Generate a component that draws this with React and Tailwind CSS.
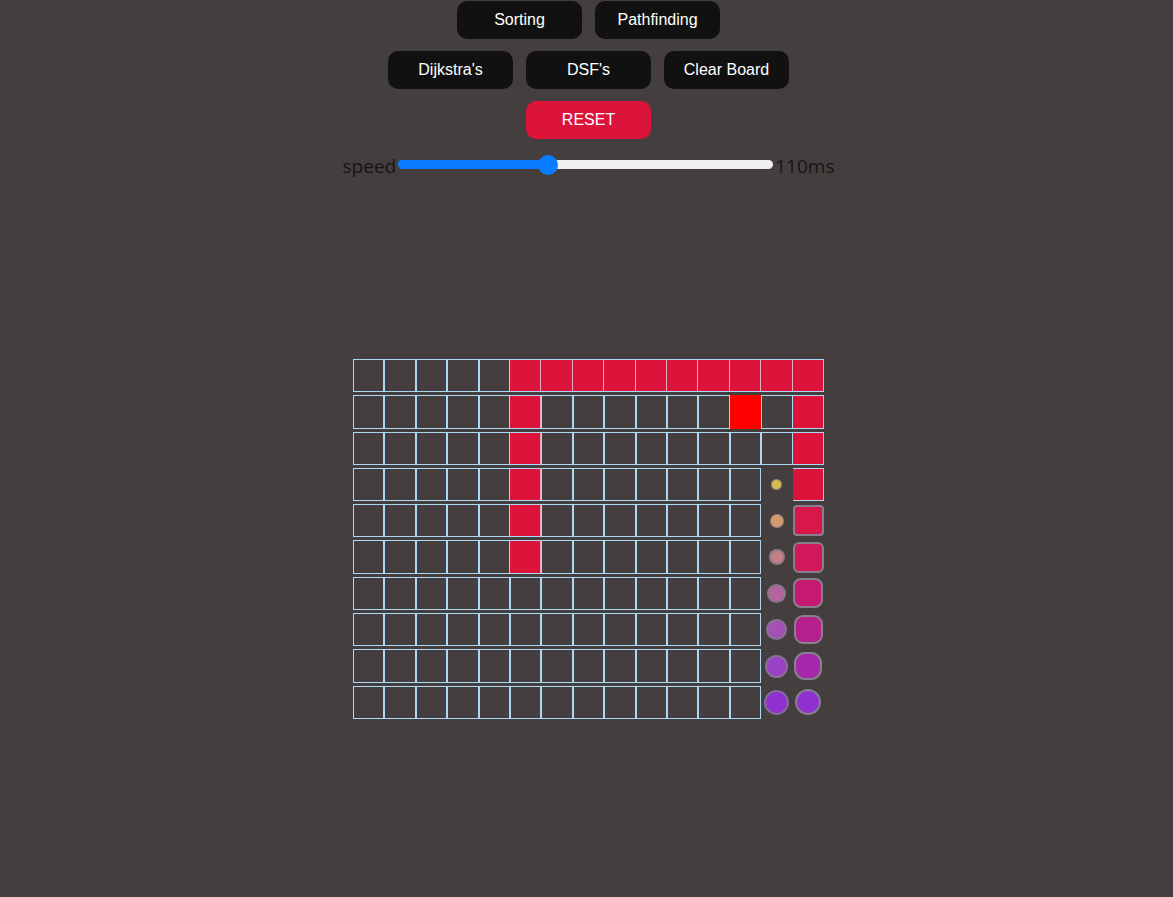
import React from 'react';

const ROWS = 10;
const COLS = 15;

const circles = {
  3: { size: 11, color: '#d8b94c', bw: 1 },
  4: { size: 13.5, color: '#d49a6c', bw: 1 },
  5: { size: 16, color: '#c47f82', bw: 2 },
  6: { size: 19, color: '#b2659c', bw: 2 },
  7: { size: 21, color: '#a352b4', bw: 2 },
  8: { size: 23, color: '#9842c6', bw: 2 },
  9: { size: 25, color: '#9030cf', bw: 2 },
};

const squares = {
  4: { size: 31, radius: 4, color: '#d8174a' },
  5: { size: 31, radius: 6, color: '#d0185a' },
  6: { size: 30, radius: 8, color: '#c61a72' },
  7: { size: 29, radius: 9, color: '#b6208c' },
  8: { size: 28, radius: 11, color: '#a628aa' },
  9: { size: 26, radius: 13, color: '#9030cf' },
};

const cellType = (r, c) => {
  if (r === 0 && c >= 5) return 'path';
  if (c === 5 && r <= 5) return 'path';
  if (c === 14 && r <= 3) return 'path';
  if (r === 1 && c === 12) return 'target';
  if (c === 13 && circles[r]) return 'circle';
  if (c === 14 && squares[r]) return 'square';
  return 'empty';
};

const Cell = ({ r, c }) => {
  const type = cellType(r, c);
  if (type === 'path') {
    return <div className="h-[33.3px] bg-[#dc143c] border-y border-y-[#add8f5] border-r border-r-[#e8a9bc]" />;
  }
  if (type === 'target') {
    return <div className="h-[33.3px] bg-[#ff0000]" />;
  }
  if (type === 'circle') {
    const s = circles[r];
    return (
      <div className="h-[33.3px] flex items-center justify-center">
        <div
          className="rounded-full border-solid border-[#85798c]/80"
          style={{ width: s.size, height: s.size, borderWidth: s.bw, backgroundColor: s.color }}
        />
      </div>
    );
  }
  if (type === 'square') {
    const s = squares[r];
    return (
      <div className="h-[33.3px] flex items-center justify-center">
        <div
          className="border-2 border-[#87808f]"
          style={{ width: s.size, height: s.size, borderRadius: s.radius, backgroundColor: s.color }}
        />
      </div>
    );
  }
  return <div className="h-[33.3px] border border-[#add8f5]" />;
};

const Btn = ({ children, red }) => (
  <button
    className={
      'w-[125px] h-[37.5px] rounded-[10px] text-white text-[16px] font-["Liberation_Sans",Arial,sans-serif] ' +
      (red ? 'bg-[#dc143c]' : 'bg-[#111111]')
    }
  >
    {children}
  </button>
);

export default function App() {
  const cells = [];
  for (let r = 0; r < ROWS; r++) {
    for (let c = 0; c < COLS; c++) {
      cells.push(<Cell key={r + '-' + c} r={r} c={c} />);
    }
  }

  return (
    <div className="min-h-[897px] bg-[#443e3e] flex flex-col items-center pl-[4px] pt-[1px]">
      <div className="flex gap-[13px]">
        <Btn>Sorting</Btn>
        <Btn>Pathfinding</Btn>
      </div>
      <div className="flex gap-[13px] mt-[12.5px]">
        <Btn>Dijkstra's</Btn>
        <Btn>DSF's</Btn>
        <Btn>Clear Board</Btn>
      </div>
      <div className="flex mt-[12.5px]">
        <Btn red>RESET</Btn>
      </div>

      <div className="flex items-center mt-[13px] font-['Open_Sans',sans-serif] text-[19px] text-[#151515]">
        <span>speed</span>
        <input
          type="range"
          min="0"
          max="280"
          defaultValue="110"
          className="appearance-none outline-none w-[375px] h-[9px] mx-[2px] mb-[2px] rounded-full bg-[linear-gradient(to_right,#0a7cff_0%,#0a7cff_40%,#efefef_40%,#efefef_100%)] [&::-webkit-slider-thumb]:appearance-none [&::-webkit-slider-thumb]:w-[20px] [&::-webkit-slider-thumb]:h-[20px] [&::-webkit-slider-thumb]:rounded-full [&::-webkit-slider-thumb]:bg-[#0a7cff]"
        />
        <span>110ms</span>
      </div>

      <div className="mt-[179px] grid grid-cols-[repeat(15,31.4px)] gap-y-[3px]">
        {cells}
      </div>
    </div>
  );
}
